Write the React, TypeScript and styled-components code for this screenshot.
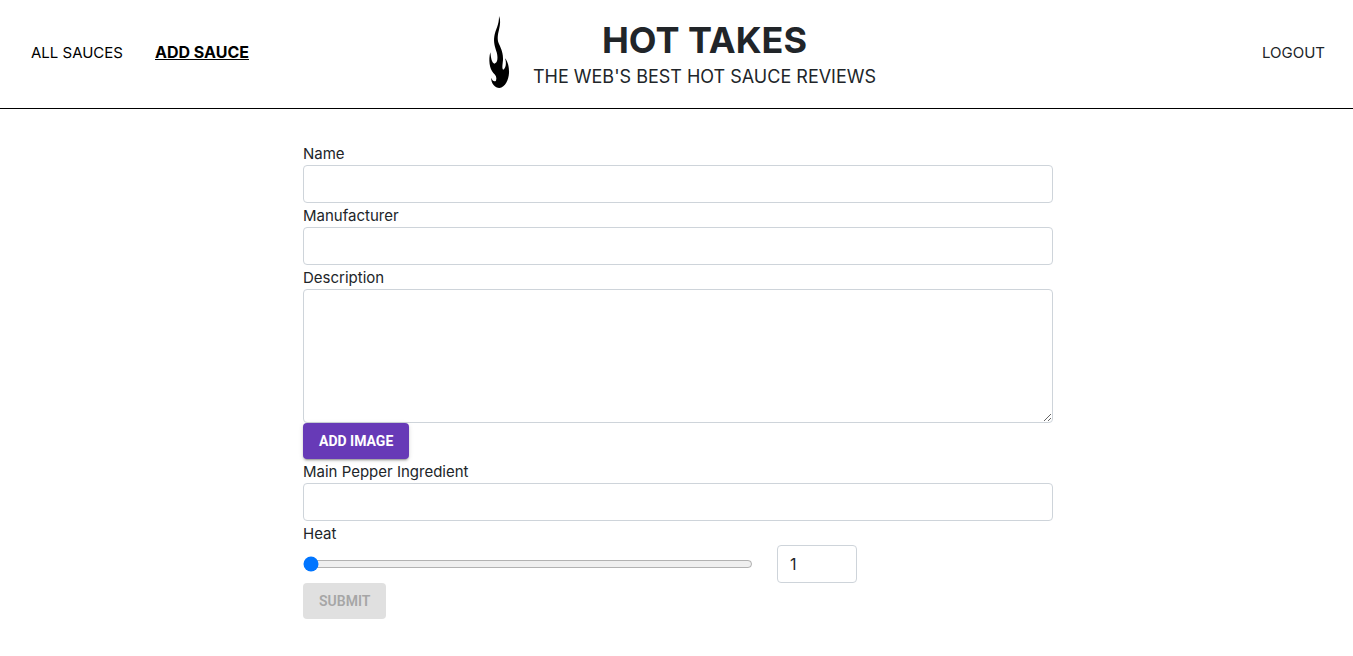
import React, { useState } from "react";
import styled, { createGlobalStyle } from "styled-components";

const GlobalStyle = createGlobalStyle`
  *, *::before, *::after { box-sizing: border-box; }
  body {
    margin: 0;
    background: #fff;
    color: #212529;
    font-family: Inter, "Liberation Sans", sans-serif;
    font-size: 15px;
    line-height: 24px;
  }
`;

const Header = styled.header`
  display: grid;
  grid-template-columns: 1fr auto 1fr;
  align-items: center;
  padding: 6px 28px;
  border-bottom: 1px solid #000;
`;

const Nav = styled.nav`
  display: flex;
  align-items: baseline;
  gap: 32px;
  padding: 0 0 4px 3px;
`;

const NavLink = styled.a<{ $active?: boolean }>`
  color: #000;
  font-size: ${(p) => (p.$active ? "16px" : "15px")};
  font-weight: ${(p) => (p.$active ? 700 : 400)};
  text-decoration: ${(p) => (p.$active ? "underline" : "none")};
`;

const LogoutButton = styled.button`
  justify-self: end;
  padding: 0 0 2px;
  border: 0;
  background: none;
  color: inherit;
  font: inherit;
  cursor: pointer;
`;

const Brand = styled.div`
  display: flex;
  align-items: center;
  gap: 12px;
  text-align: center;
`;

const BrandText = styled.div`
  padding-bottom: 2px;
`;

const Flame = styled.svg`
  width: 44px;
  height: 96px;
`;

const Title = styled.h1`
  margin: 0 0 2px;
  font-size: 36px;
  line-height: 46px;
  font-weight: 700;
`;

const Tagline = styled.p`
  margin: 0;
  font-size: 18px;
  line-height: 24px;
`;

const Main = styled.main`
  padding: 32px 0 32px 3px;
`;

const Form = styled.form`
  display: flex;
  flex-direction: column;
  align-items: flex-start;
  max-width: 750px;
  margin: 0 auto;
`;

const Label = styled.label`
  display: block;
  padding-top: 2px;
  line-height: 22px;
`;

const Field = styled.input`
  width: 100%;
  height: 38px;
  padding: 6px 12px;
  border: 1px solid #ced4da;
  border-radius: 4px;
  background: #fff;
  color: #212529;
  font: inherit;
  font-size: 16px;
`;

const TextArea = styled(Field).attrs({ as: "textarea" })`
  height: 134px;
  resize: vertical;
`;

const HeatRow = styled.div`
  display: flex;
  align-items: center;
  gap: 24px;
  width: 100%;
`;

const Slider = styled.input`
  width: 60%;
  margin: 0;
`;

const HeatValue = styled(Field)`
  width: 80px;
`;

const Button = styled.button`
  height: 36px;
  padding: 0 16px;
  border: 0;
  border-radius: 4px;
  background: #673ab7;
  color: #fff;
  font-family: Roboto, sans-serif;
  font-size: 14px;
  line-height: 36px;
  font-weight: 700;
  box-shadow: 0 3px 1px -2px rgba(0, 0, 0, 0.2), 0 2px 2px 0 rgba(0, 0, 0, 0.14),
    0 1px 5px 0 rgba(0, 0, 0, 0.12);
  &:disabled {
    background: #e0e0e0;
    color: #a6a6a6;
    font-weight: 600;
    box-shadow: none;
  }
`;

export default function App() {
  const [heat, setHeat] = useState("1");
  return (
    <>
      <GlobalStyle />
      <Header>
        <Nav>
          <NavLink href="#sauces">ALL SAUCES</NavLink>
          <NavLink href="#new-sauce" $active>
            ADD SAUCE
          </NavLink>
        </Nav>
        <Brand>
          <Flame viewBox="18 3 132 288" aria-hidden="true">
            <path d="M84 33C89 45 88 58 84 74C80 90 78 103 84 117C91 132 97 146 96 165C95 178 92 191 97 194C103 191 108 177 102 160C111 170 115 188 114 204C113 224 103 247 85 249C73 249 59 235 61 218C64 228 70 231 75 227C78 219 75 210 67 204C55 191 52 164 58 142C60 158 62 174 70 176C81 174 81 156 77 142C72 126 67 112 70 94C73 74 85 59 84 33Z" />
          </Flame>
          <BrandText>
            <Title>HOT TAKES</Title>
            <Tagline>THE WEB'S BEST HOT SAUCE REVIEWS</Tagline>
          </BrandText>
        </Brand>
        <LogoutButton type="button">LOGOUT</LogoutButton>
      </Header>
      <Main>
        <Form onSubmit={(e) => e.preventDefault()}>
          <Label htmlFor="name">Name</Label>
          <Field id="name" type="text" />
          <Label htmlFor="manufacturer">Manufacturer</Label>
          <Field id="manufacturer" type="text" />
          <Label htmlFor="description">Description</Label>
          <TextArea id="description" />
          <Button type="button">ADD IMAGE</Button>
          <Label htmlFor="pepper">Main Pepper Ingredient</Label>
          <Field id="pepper" type="text" />
          <Label htmlFor="heat">Heat</Label>
          <HeatRow>
            <Slider
              id="heat"
              type="range"
              min="1"
              max="10"
              value={heat}
              onChange={(e) => setHeat(e.target.value)}
            />
            <HeatValue
              type="number"
              aria-label="Heat value"
              value={heat}
              onChange={(e) => setHeat(e.target.value)}
            />
          </HeatRow>
          <Button type="submit" disabled>
            SUBMIT
          </Button>
        </Form>
      </Main>
    </>
  );
}
